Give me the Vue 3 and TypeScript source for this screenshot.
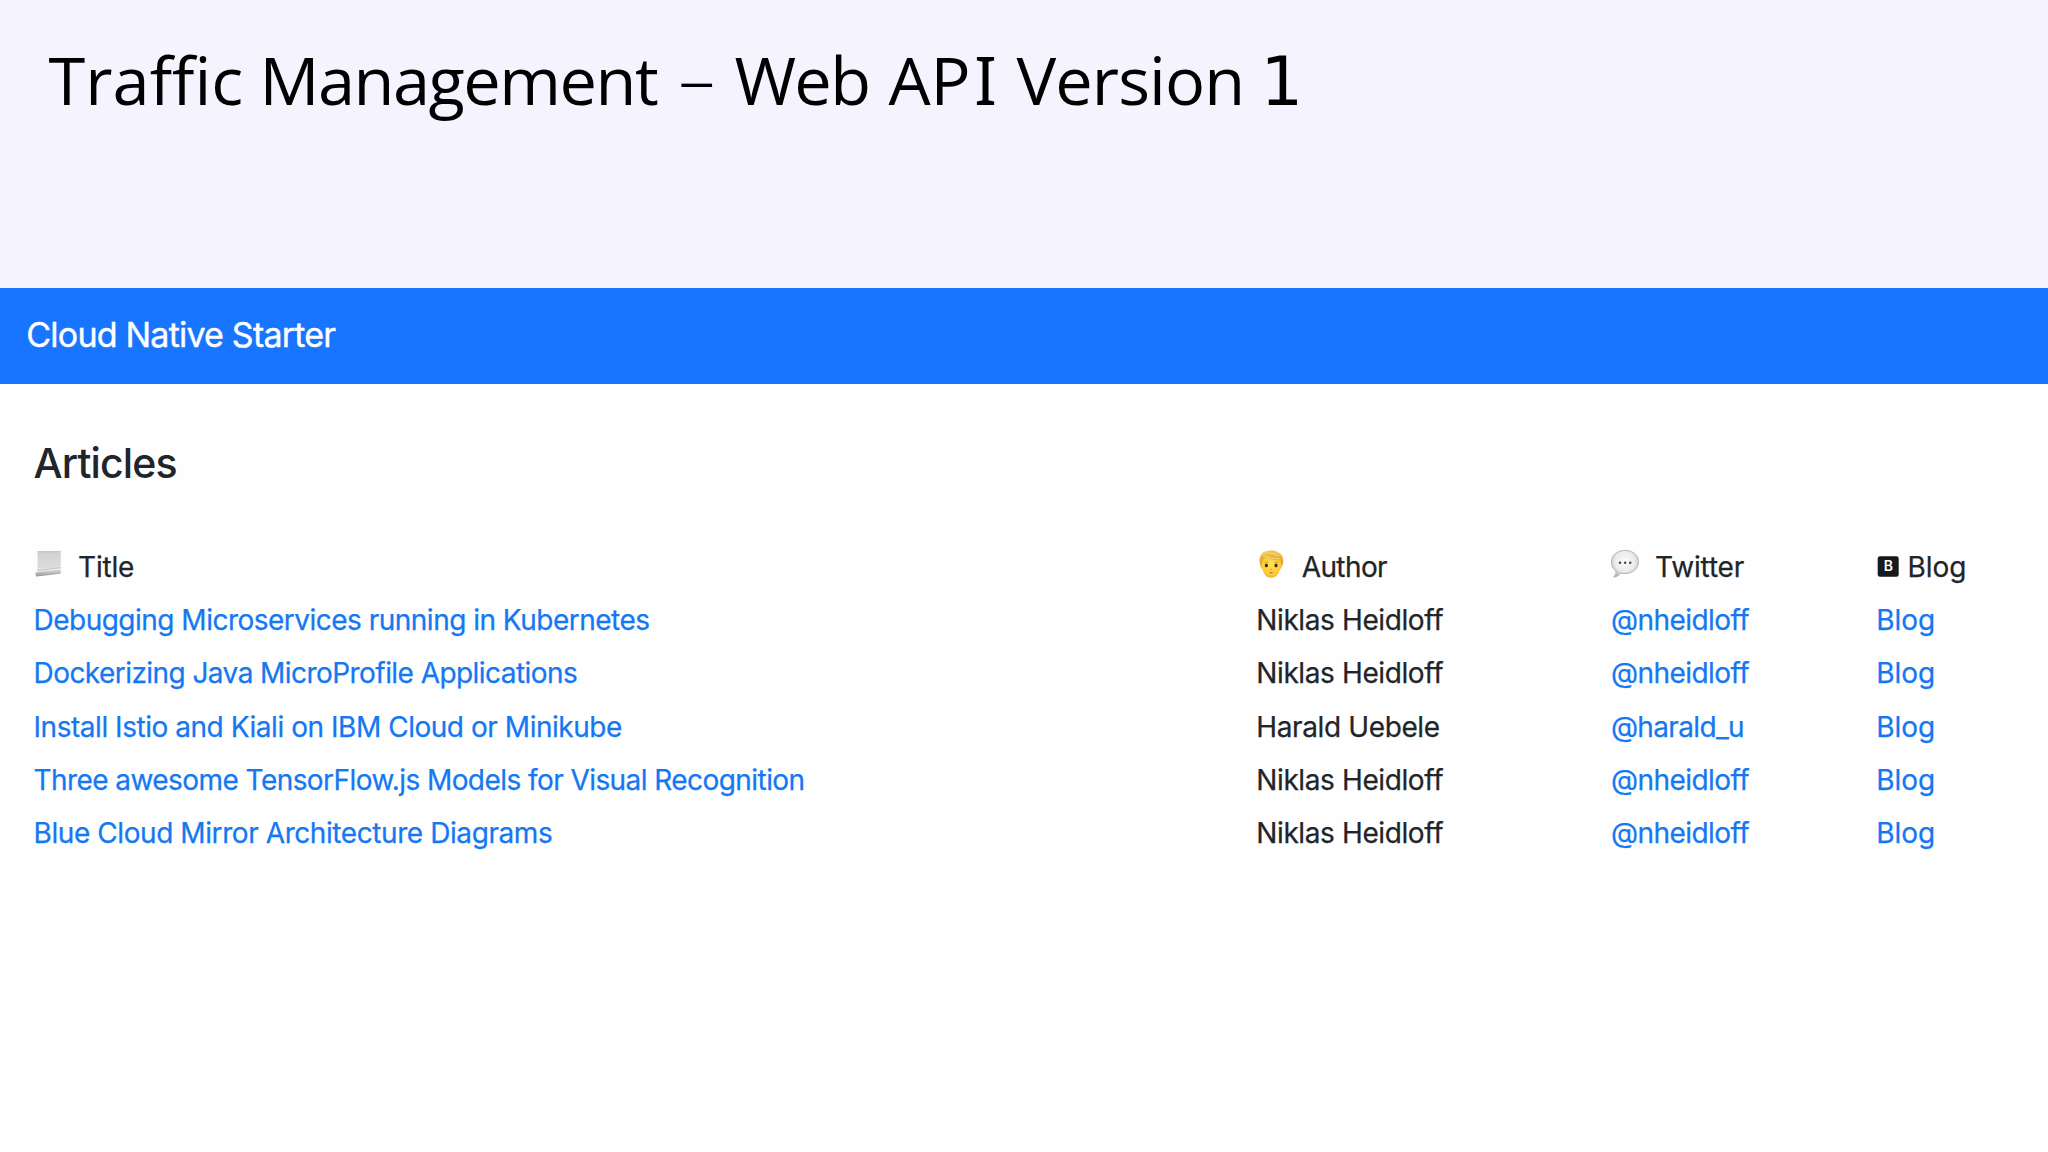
<script setup lang="ts">
interface Cell {
  text: string
  tracking: number
}

interface Article {
  title: Cell
  author: Cell
  twitter: Cell
}

const cell = (text: string, tracking: number): Cell => ({ text, tracking })
const spacing = (c: Cell) => ({ letterSpacing: `${c.tracking}px` })

const niklas = cell('Niklas Heidloff', -0.39)
const nheidloff = cell('@nheidloff', -0.56)

const articles: Article[] = [
  { title: cell('Debugging Microservices running in Kubernetes', -0.51), author: niklas, twitter: nheidloff },
  { title: cell('Dockerizing Java MicroProfile Applications', -0.56), author: niklas, twitter: nheidloff },
  {
    title: cell('Install Istio and Kiali on IBM Cloud or Minikube', -0.46),
    author: cell('Harald Uebele', -0.38),
    twitter: cell('@harald_u', -0.66),
  },
  { title: cell('Three awesome TensorFlow.js Models for Visual Recognition', -0.565), author: niklas, twitter: nheidloff },
  { title: cell('Blue Cloud Mirror Architecture Diagrams', -0.42), author: niklas, twitter: nheidloff },
]
</script>

<template>
  <div class="slide">
    <header class="slide-head">
      <h1 class="slide-title">
        <span>Traffic</span>
        <span class="management">Management</span>
        <span class="dash">–</span>
        <span class="web">Web</span>
        <span>AP<span class="serif-i">I</span></span>
        <span class="version">Version</span>
        <span class="one">1</span>
      </h1>
    </header>

    <nav class="navbar">Cloud Native Starter</nav>

    <main class="content">
      <h2 class="heading">Articles</h2>

      <div class="row">
        <div class="head title-head">
          <!-- scroll -->
          <svg class="icon" width="30" height="32" viewBox="0 0 30 32">
            <defs>
              <linearGradient id="paper" x1="0" y1="0" x2="0" y2="1">
                <stop offset="0" stop-color="#c3c3c7" />
                <stop offset="0.12" stop-color="#d2d2d5" />
                <stop offset="1" stop-color="#dededf" />
              </linearGradient>
              <linearGradient id="roll" x1="0" y1="0" x2="0" y2="1">
                <stop offset="0" stop-color="#d6d6d8" />
                <stop offset="0.45" stop-color="#bdbdc0" />
                <stop offset="1" stop-color="#929296" />
              </linearGradient>
            </defs>
            <path d="M3.5 2H26.7V20.5L3.5 22Z" fill="url(#paper)" />
            <path d="M3.5 18.5C10 21.5 18 18 26.7 17.2V22L3.5 24Z" fill="#ececed" />
            <path d="M3 21C11 21.5 19 19 26.5 18.6" fill="none" stroke="#b2b2b5" stroke-width="0.8" />
            <path d="M1.6 23.2L26.3 20.7Q27.3 22 26.6 24.7L2.2 27.4Q1 25.5 1.6 23.2Z" fill="url(#roll)" />
          </svg>
          <span class="title-label">Title</span>
        </div>

        <div class="head author-head">
          <!-- person with blond hair -->
          <svg class="icon" width="30" height="32" viewBox="0 0 30 32">
            <defs>
              <radialGradient id="face" cx="0.5" cy="0.45" r="0.62">
                <stop offset="0" stop-color="#ffe052" />
                <stop offset="0.7" stop-color="#fdcb33" />
                <stop offset="1" stop-color="#e5a01a" />
              </radialGradient>
              <linearGradient id="hair" x1="0" y1="0" x2="0" y2="1">
                <stop offset="0" stop-color="#f3c959" />
                <stop offset="1" stop-color="#dc9f22" />
              </linearGradient>
            </defs>
            <path d="M4.6 10Q5 4 15 4T25.8 10L26 17Q25.2 20 24 20.5Q21.5 28.6 15.3 28.8T6.5 20.5Q4.6 20 4.4 17Z" fill="url(#face)" />
            <path d="M3.7 14C2.7 7.5 6 2 13 1.8C16.5 .7 20 1.8 22 3.5C27 5 28.2 10.5 26.6 16L25.4 16.5L24.4 11.5C19 11.6 13.5 10 10 8.2C7.6 9.8 6 11.5 5.7 16L4.7 16Z" fill="url(#hair)" />
            <path d="M7 6.3C12 8.4 18 10.2 23.5 9.8M7 4.8C13 3.2 18 4.3 22 6.6" fill="none" stroke="#f9db86" stroke-width="0.9" />
            <ellipse cx="10.4" cy="16.4" rx="1.5" ry="1.9" fill="#3c2814" />
            <ellipse cx="20" cy="16.4" rx="1.5" ry="1.9" fill="#3c2814" />
            <path d="M8.3 13.5Q10.3 12.4 12.3 13.3M18.2 13.3Q20.2 12.4 22.2 13.5" fill="none" stroke="#c98f1e" stroke-width="0.7" />
            <path d="M14.2 20.2Q15.2 20.8 16.2 20.2" fill="none" stroke="#d99420" stroke-width="0.8" />
            <path d="M13 23.5Q15.2 23 17.4 23.5Q15.2 25.2 13 23.5Z" fill="#b9552a" />
          </svg>
          <span class="author-label">Author</span>
        </div>

        <div class="head twitter-head">
          <!-- speech balloon -->
          <svg class="icon" width="30" height="32" viewBox="0 0 30 32">
            <defs>
              <radialGradient id="bubble" cx="0.5" cy="0.42" r="0.6">
                <stop offset="0" stop-color="#fbfbfb" />
                <stop offset="0.62" stop-color="#ebebec" />
                <stop offset="1" stop-color="#b6b6ba" />
              </radialGradient>
            </defs>
            <path d="M14 1.4C21.8 1.4 27.5 6.2 27.5 12.8S21.8 24.6 14 24.6C12.4 24.6 11 24.4 9.6 24C8 26.5 5.6 28 2.6 28.1C4.4 26.4 5.1 24.4 5 22C1.7 19.8 .4 16.6 .4 12.8C.4 6.2 6.2 1.4 14 1.4Z" fill="url(#bubble)" stroke="#a9a9ad" stroke-width="0.8" />
            <circle cx="9" cy="13.8" r="1.25" fill="#48484b" />
            <circle cx="14.1" cy="13.8" r="1.25" fill="#48484b" />
            <circle cx="19.2" cy="13.8" r="1.25" fill="#48484b" />
          </svg>
          <span class="twitter-label">Twitter</span>
        </div>

        <div class="head blog-head">
          <svg class="icon" width="26" height="32" viewBox="0 0 26 32">
            <rect x="1.7" y="7.2" width="21" height="20.6" rx="2.4" fill="#16191e" />
            <text class="badge-letter" x="12.4" y="22.4" text-anchor="middle">B</text>
          </svg>
          <span>Blog</span>
        </div>
      </div>

      <div v-for="article in articles" :key="article.title.text" class="row">
        <div><a :style="spacing(article.title)">{{ article.title.text }}</a></div>
        <div :style="spacing(article.author)">{{ article.author.text }}</div>
        <div><a :style="spacing(article.twitter)">{{ article.twitter.text }}</a></div>
        <div><a>Blog</a></div>
      </div>
    </main>
  </div>
</template>

<style>
body {
  margin: 0;
  background: #fefefe;
}
</style>

<style scoped>
.slide {
  height: 1152px;
  overflow: hidden;
  background: #fefefe;
  color: #212529;
  font-family: Inter, "Liberation Sans", sans-serif;
}

.slide-head {
  box-sizing: border-box;
  height: 288px;
  padding: 31.6px 0 0 48.6px;
  background: #f5f4fe;
}

.slide-title {
  display: grid;
  grid-template-columns: 210.8px 419.2px 55.8px 154px 128px 244px auto;
  align-items: baseline;
  margin: 0;
  color: #000;
  font: 400 66.7px/90px "Open Sans", sans-serif;
  font-variant-ligatures: none;
  white-space: nowrap;
}

.management {
  letter-spacing: -1.45px;
}

.dash {
  font-size: 73px;
  font-weight: 300;
}

.web {
  letter-spacing: -1.6px;
}

.serif-i {
  margin-left: 3.5px;
  font-family: "Noto Sans", sans-serif;
}

.version {
  letter-spacing: -0.9px;
}

.one {
  font-family: "DejaVu Sans", sans-serif;
  font-size: 67px;
}

.navbar {
  box-sizing: border-box;
  height: 96px;
  padding: 0 0 0 26.3px;
  background: #1775ff;
  color: #fff;
  font-size: 34px;
  line-height: 93px;
  letter-spacing: -0.79px;
  -webkit-text-stroke: 0.4px currentColor;
}

.content {
  padding: 54px 0 0 33.5px;
}

.heading {
  margin: 0 0 53.3px;
  font-size: 41px;
  font-weight: 500;
  line-height: 50px;
  letter-spacing: -0.85px;
}

.row {
  display: grid;
  grid-template-columns: 1222.8px 354.7px 265.2px auto;
  height: 53.1px;
  font-size: 28px;
  line-height: 53.1px;
  white-space: nowrap;
  -webkit-text-stroke: 0.25px currentColor;
}

.row a {
  color: #1478f2;
}

.head {
  display: flex;
  align-items: flex-start;
}

.icon {
  flex: none;
  margin-top: 7.7px;
  -webkit-text-stroke: 0;
}

.title-head {
  gap: 14.6px;
}

.title-label {
  letter-spacing: -0.2px;
}

.author-head {
  gap: 15.4px;
}

.author-label {
  letter-spacing: -0.6px;
}

.twitter-head {
  gap: 14px;
}

.twitter-label {
  letter-spacing: -0.15px;
}

.blog-head {
  gap: 5.3px;
}

.badge-letter {
  fill: #fff;
  font: 600 14px Inter, sans-serif;
}
</style>
